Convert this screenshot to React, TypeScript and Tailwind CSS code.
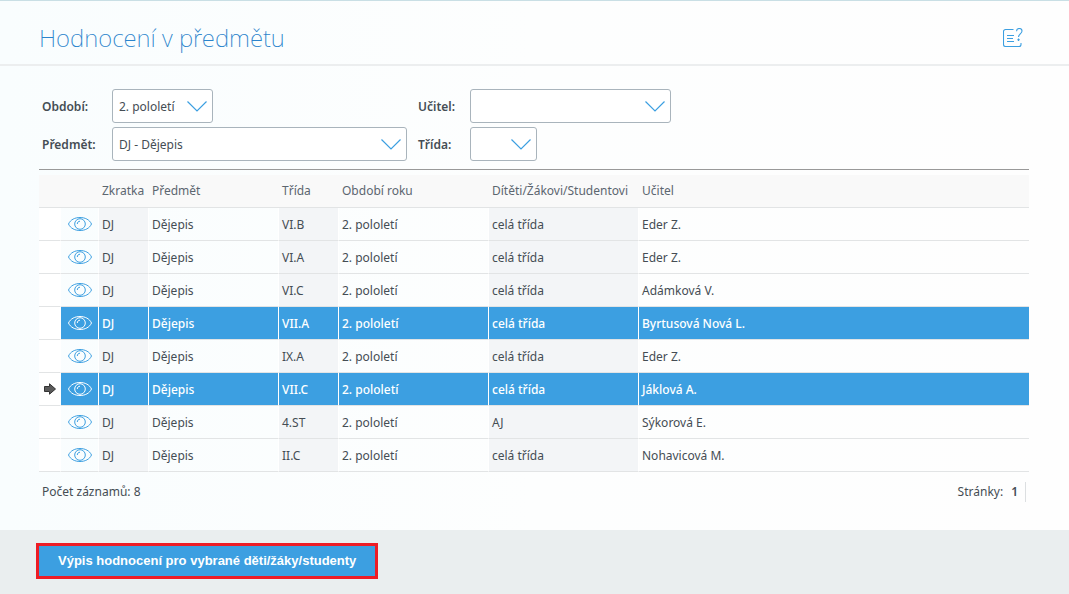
import React, { useState } from "react";
import clsx from "clsx";

const records = [
  { id: 1, code: "DJ", subject: "Dějepis", group: "VI.B", term: "2. pololetí", target: "celá třída", teacher: "Eder Z." },
  { id: 2, code: "DJ", subject: "Dějepis", group: "VI.A", term: "2. pololetí", target: "celá třída", teacher: "Eder Z." },
  { id: 3, code: "DJ", subject: "Dějepis", group: "VI.C", term: "2. pololetí", target: "celá třída", teacher: "Adámková V." },
  { id: 4, code: "DJ", subject: "Dějepis", group: "VII.A", term: "2. pololetí", target: "celá třída", teacher: "Byrtusová Nová L." },
  { id: 5, code: "DJ", subject: "Dějepis", group: "IX.A", term: "2. pololetí", target: "celá třída", teacher: "Eder Z." },
  { id: 6, code: "DJ", subject: "Dějepis", group: "VII.C", term: "2. pololetí", target: "celá třída", teacher: "Jáklová A." },
  { id: 7, code: "DJ", subject: "Dějepis", group: "4.ST", term: "2. pololetí", target: "AJ", teacher: "Sýkorová E." },
  { id: 8, code: "DJ", subject: "Dějepis", group: "II.C", term: "2. pololetí", target: "celá třída", teacher: "Nohavicová M." },
];

function EyeIcon() {
  return (
    <svg width="24" height="14" viewBox="0 0 24 14" fill="none" stroke="currentColor" strokeWidth="1" className="block">
      <path d="M.5 7C2.500 2.600 7 .5 12 .5S21.500 2.600 23.500 7C21.500 11.400 17 13.500 12 13.500S2.500 11.400 .5 7Z" />
      <circle cx="12" cy="7" r="5.300" />
      <path d="M9.300 7C9.300 5.300 10.300 4.300 12 4.200" />
    </svg>
  );
}

function HelpIcon() {
  return (
    <svg width="20" height="20" viewBox="0 0 20 20" fill="none" stroke="currentColor" strokeWidth="1.100" className="block">
      <path d="M10.500 1.500H2.500a2 2 0 0 0-2 2v13a2 2 0 0 0 2 2h13.500a2 2 0 0 0 2-2V15" />
      <path d="M4 7.500h7M4 10.500h6M4 13.500h7" />
      <path d="M13.500 3.200C13.700 1.400 14.600 .5 16.200 .5c1.700 0 2.800 1.100 2.800 2.600 0 2.700-3.500 3-3.500 5.900" />
      <path d="M15.500 10.500v2.500M14.300 11.700h2.500" />
    </svg>
  );
}

function RowArrow() {
  return (
    <svg width="12" height="12" viewBox="0 0 12 12" className="block">
      <path d="M.5 3.500H5.500V.8L11.500 6 5.500 11.200V8.500H.5Z" fill="#5a5a5a" stroke="#333" strokeWidth="1" />
    </svg>
  );
}

function Select({ id, options, className }: { id: string; options: string[]; className: string }) {
  return (
    <div className={clsx("relative", className)}>
      <select id={id} className="block h-[34px] w-full appearance-none rounded-[3px] border border-[#a9b4bc] bg-white pl-[6px] pr-8 pt-0.5 outline-none">
        {options.map((o) => (
          <option key={o}>{o}</option>
        ))}
      </select>
      <svg width="20" height="11" viewBox="0 0 20 11" fill="none" stroke="#3c9fe1" strokeWidth="1.200" className="pointer-events-none absolute right-1.5 top-3">
        <path d="M.5 .5 10 10 19.500 .5" />
      </svg>
    </div>
  );
}

export default function App() {
  const [selected, setSelected] = useState([4, 6]);
  const [current, setCurrent] = useState(6);

  const toggle = (id: number) => {
    setCurrent(id);
    setSelected((prev) => (prev.includes(id) ? prev.filter((s) => s !== id) : [...prev, id]));
  };

  return (
    <div className="flex min-h-screen flex-col border-t border-[#c9dfe5] bg-linear-to-r from-[#f9fdfe] via-[#fdfefe] to-[#fefefe] font-['Noto_Sans','Open_Sans',sans-serif] text-xs leading-5 text-[#454d54]">
      <header className="flex h-[65px] items-center justify-between border-b-2 border-[#eceeef] pl-[39px] pr-[46px] pt-[10px]">
        <h1 className="text-2xl font-extralight text-[#2b84cc]">Hodnocení v předmětu</h1>
        <button type="button" aria-label="Nápověda" className="text-[#3c9fe1]">
          <HelpIcon />
        </button>
      </header>

      <main className="flex-1 px-10 pb-7 pt-[23px]">
        <form className="grid grid-cols-[70px_306px_52px_201px] items-center gap-y-1 pb-2 pl-[2px] [&>label]:pt-0.5 [&>label]:font-semibold">
          <label htmlFor="term">Období:</label>
          <Select id="term" options={["2. pololetí", "1. pololetí"]} className="w-[101px]" />
          <label htmlFor="teacher">Učitel:</label>
          <Select id="teacher" options={[""]} className="w-full" />
          <label htmlFor="subject">Předmět:</label>
          <Select id="subject" options={["DJ - Dějepis"]} className="w-[295px]" />
          <label htmlFor="group">Třída:</label>
          <Select id="group" options={[""]} className="w-[67px]" />
        </form>

        <div className="-ml-px border-t border-[#999] pt-[5px]">
          <table className="w-full table-fixed border-separate border-spacing-0 text-left">
            <colgroup>
              <col className="w-[22px]" />
              <col className="w-[38px]" />
              <col className="w-[50px]" />
              <col className="w-[130px]" />
              <col className="w-[60px]" />
              <col className="w-[150px]" />
              <col className="w-[150px]" />
              <col />
            </colgroup>
            <thead>
              <tr className="h-[33px] bg-[#f9f9f9] text-[#5c6670] [&>th]:whitespace-nowrap [&>th]:border-b [&>th]:border-[#e2e4e5] [&>th]:p-0 [&>th]:pl-[3px] [&>th]:font-normal">
                <th aria-label="Aktuální" />
                <th aria-label="Detail" />
                <th>Zkratka</th>
                <th>Předmět</th>
                <th>Třída</th>
                <th>Období roku</th>
                <th>Dítěti/Žákovi/Studentovi</th>
                <th>Učitel</th>
              </tr>
            </thead>
            <tbody>
              {records.map((r) => {
                const active = selected.includes(r.id);
                const shade = active ? "bg-[#3c9fe1]" : "bg-[#f3f5f7]";
                const plain = active && "bg-[#3c9fe1]";
                return (
                  <tr
                    key={r.id}
                    onClick={() => toggle(r.id)}
                    className={clsx(
                      "h-[33px] [&>td]:border-b [&>td]:border-b-[#e2e4e5] [&>td]:border-r-white [&>td]:p-0 [&>td]:pl-[3px] [&>td:nth-child(n+3)]:pt-0.5 [&>td:not(:last-child)]:border-r",
                      active && "font-medium text-white"
                    )}
                  >
                    <td className="bg-white">
                      <div className="flex pl-0.5">{current === r.id && <RowArrow />}</div>
                    </td>
                    <td className={clsx(plain)}>
                      <button type="button" aria-label="Zobrazit" className={clsx("ml-1 block", active ? "text-white" : "text-[#3c9fe1]")}>
                        <EyeIcon />
                      </button>
                    </td>
                    <td className={shade}>{r.code}</td>
                    <td className={clsx(plain)}>{r.subject}</td>
                    <td className={shade}>{r.group}</td>
                    <td className={clsx(plain)}>{r.term}</td>
                    <td className={shade}>{r.target}</td>
                    <td className={clsx(plain)}>{r.teacher}</td>
                  </tr>
                );
              })}
            </tbody>
          </table>
        </div>

        <div className="flex justify-between pl-[2px] pr-[3px] pt-[10px]">
          <span>Počet záznamů: {records.length}</span>
          <span className="flex gap-2 border-r border-[#dcdfe1] pr-[7px]">
            Stránky: <b className="font-semibold">1</b>
          </span>
        </div>
      </main>

      <footer className="bg-[#eaeeef] px-9 pb-[15px] pt-[13px]">
        <button
          type="button"
          className="block h-9 border-3 border-[#ee1c25] bg-[#3c9fe1] px-[19px] font-['Liberation_Sans',Arial,sans-serif] text-[13px] font-bold text-white"
        >
          Výpis hodnocení pro vybrané děti/žáky/studenty
        </button>
      </footer>
    </div>
  );
}
